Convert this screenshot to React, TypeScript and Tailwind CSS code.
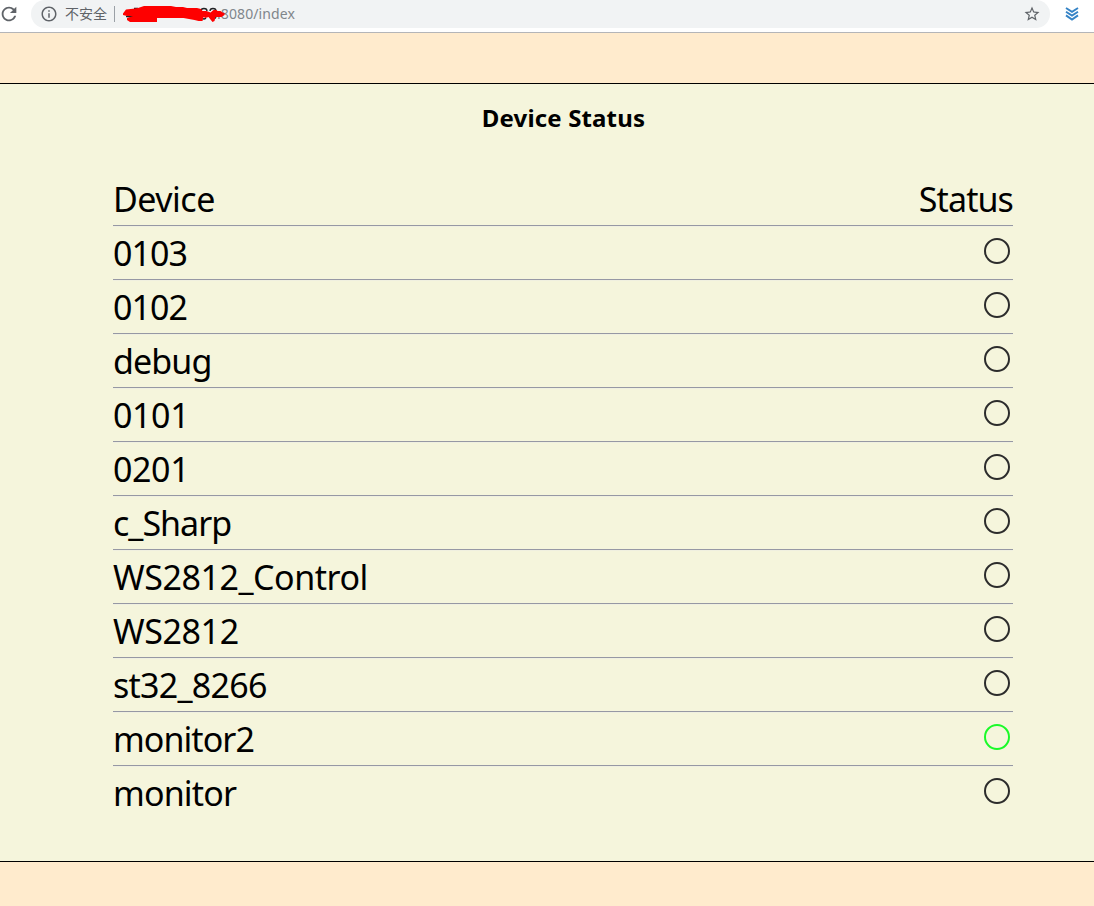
import { MdInfoOutline, MdRefresh, MdStarBorder } from "react-icons/md";

type Device = { name: string; tracking: string; online?: boolean };

const devices: Device[] = [
  { name: "0103", tracking: "tracking-[-0.95px]" },
  { name: "0102", tracking: "tracking-[-0.95px]" },
  { name: "debug", tracking: "tracking-[-0.9px]" },
  { name: "0101", tracking: "tracking-[-0.4px]" },
  { name: "0201", tracking: "tracking-[-0.4px]" },
  { name: "c_Sharp", tracking: "tracking-[-1px]" },
  { name: "WS2812_Control", tracking: "tracking-[-0.45px]" },
  { name: "WS2812", tracking: "tracking-[-0.4px]" },
  { name: "st32_8266", tracking: "tracking-[-0.75px]" },
  { name: "monitor2", tracking: "tracking-[-0.95px]", online: true },
  { name: "monitor", tracking: "tracking-[-0.85px]" },
];

function AddressBar() {
  return (
    <div className="flex h-[33px] items-start border-b border-[#b4b5b8] bg-white text-[#5f6368]">
      <MdRefresh className="-ml-[2px] mt-[3px] size-[22px] shrink-0" />
      <div className="ml-[11px] flex h-7 w-[1019px] items-center rounded-full bg-[#f1f3f4] pl-[9px] pr-[9px] font-['Noto_Sans','Noto_Sans_CJK_SC',sans-serif] text-[14px] leading-7">
        <MdInfoOutline className="size-[18px]" />
        <span className="ml-[7px]">不安全</span>
        <span className="ml-[7px] h-4 w-px bg-[#9aa0a6]" />
        <svg className="relative z-10 ml-2 h-5 w-[102px] shrink-0" viewBox="0 0 102 20">
          <path d="M11 4.5h4M3 12.5h8" stroke="#202124" strokeWidth="1.3" />
          <path
            d="M78 7q0-2.500 3-2.500t3 2.500M87 7q0-2.500 3-2.500t3 2.500M79 14q2 2 4 0M90 14q2 1.500 3-1"
            fill="none"
            stroke="#202124"
            strokeWidth="1.3"
          />
          <path
            d="M0 9.500L3 5.500l7-.8 5-.7 6-2h27l5 1h7l4 1h10l4 1 1.500 2h4l4 1.500 3-2.500h3l1 1h3l2 1.500 2 .5v2l-3 2h-6l-1 4-2 1-4-5-3 1-2-1-1 4h-4l-4-1-11-2H34v4H7l-3-2v-2l6-2H4L0 11z"
            fill="#fe0000"
          />
        </svg>
        <span className="-ml-[8px] tracking-[0.1px] text-[#80868b]">:8080/index</span>
        <MdStarBorder className="ml-auto size-[18px]" />
      </div>
      <svg className="ml-[15px] mt-[7px] size-[14px]" viewBox="0 0 14 14" fill="none" stroke="#3583c6" strokeWidth="1.9">
        <path d="M1 1l6 3.800L13 1M1 4.700l6 3.900 6-3.900M1 8.400l6 4.200 6-4.200" />
      </svg>
    </div>
  );
}

function DeviceRow({ device, last }: { device: Device; last: boolean }) {
  return (
    <li
      className={`flex h-[54px] items-start justify-between ${last ? "" : "border-b border-[#9698a4] shadow-[0_1px_0_#f0f0e0]"}`}
    >
      <span className={`leading-[54px] ${device.tracking}`}>{device.name}</span>
      <span
        className={`mt-3 mr-[3px] size-[26px] rounded-full border-2 ${device.online ? "border-[#1afa29]" : "border-[#2c2c2c]"}`}
      />
    </li>
  );
}

export default function App() {
  return (
    <div className="flex h-[906px] w-[1094px] flex-col overflow-hidden bg-[#ffebcd] font-['Noto_Sans',sans-serif] text-black">
      <AddressBar />
      <main className="mt-[50px] h-[779px] border-y border-black bg-[#f5f5dc]">
        <h1 className="ml-[33px] mt-[17px] text-center text-[24px] leading-[34px] font-bold tracking-[0.15px]">Device Status</h1>
        <div className="mt-[37px] ml-[113px] w-[900px] text-[34px]">
          <div className="flex h-[54px] justify-between border-b border-[#9698a4] leading-[54px] shadow-[0_1px_0_#f0f0e0]">
            <span className="tracking-[-0.5px]">Device</span>
            <span className="tracking-[-0.9px]">Status</span>
          </div>
          <ul>
            {devices.map((device, i) => (
              <DeviceRow key={device.name} device={device} last={i === devices.length - 1} />
            ))}
          </ul>
        </div>
      </main>
    </div>
  );
}
